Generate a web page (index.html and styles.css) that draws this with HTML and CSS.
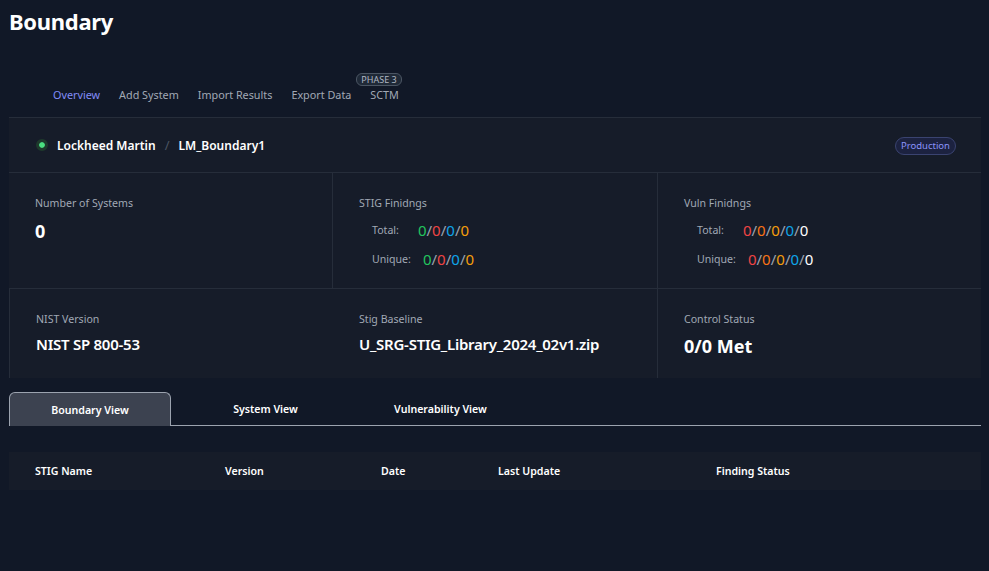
FILE: index.html
```html
<!DOCTYPE html>
<html lang="en">
<head>
<meta charset="utf-8">
<title>Boundary</title>
<link rel="stylesheet" href="styles.css">
</head>
<body>
<div class="page">
  <h1 class="title">Boundary</h1>
  <nav class="nav">
    <a class="nav-link active">Overview</a>
    <a class="nav-link">Add System</a>
    <a class="nav-link">Import Results</a>
    <a class="nav-link">Export Data</a>
    <a class="nav-link badge-host">SCTM<span class="phase">PHASE 3</span></a>
  </nav>

  <section class="card">
    <div class="card-head">
      <div class="crumbs">
        <span class="dot"></span>
        <span class="crumb">Lockheed Martin</span>
        <span class="sep">/</span>
        <span class="crumb">LM_Boundary1</span>
      </div>
      <span class="env">Production</span>
    </div>
    <div class="stats">
      <div class="stat">
        <div class="label">Number of Systems</div>
        <div class="value">0</div>
      </div>
      <div class="stat">
        <div class="label">STIG Finidngs</div>
        <div class="counts">
          <div class="count-row"><span class="count-label total">Total:</span><span class="nums"><span class="g">0</span>/<span class="r">0</span>/<span class="b">0</span>/<span class="o">0</span></span></div>
          <div class="count-row"><span class="count-label unique">Unique:</span><span class="nums"><span class="g">0</span>/<span class="r">0</span>/<span class="b">0</span>/<span class="o">0</span></span></div>
        </div>
      </div>
      <div class="stat">
        <div class="label">Vuln Finidngs</div>
        <div class="counts">
          <div class="count-row"><span class="count-label total">Total:</span><span class="nums"><span class="r">0</span>/<span class="or">0</span>/<span class="o">0</span>/<span class="b">0</span>/<span class="w">0</span></span></div>
          <div class="count-row"><span class="count-label unique">Unique:</span><span class="nums"><span class="r">0</span>/<span class="or">0</span>/<span class="o">0</span>/<span class="b">0</span>/<span class="w">0</span></span></div>
        </div>
      </div>
      <div class="stat row2">
        <div class="label">NIST Version</div>
        <div class="value2">NIST SP 800-53</div>
      </div>
      <div class="stat row2">
        <div class="label">Stig Baseline</div>
        <div class="value2">U_SRG-STIG_Library_2024_02v1.zip</div>
      </div>
      <div class="stat row2">
        <div class="label">Control Status</div>
        <div class="value3">0/0 Met</div>
      </div>
    </div>
  </section>

  <div class="tabs">
    <button class="tab active">Boundary View</button>
    <button class="tab">System View</button>
    <button class="tab">Vulnerability View</button>
  </div>

  <div class="table-head">
    <span class="th c1">STIG Name</span>
    <span class="th c2">Version</span>
    <span class="th c3">Date</span>
    <span class="th c4">Last Update</span>
    <span class="th c5">Finding Status</span>
  </div>
</div>
</body>
</html>
```
FILE: styles.css
```css
* { box-sizing: border-box; }
html, body { margin: 0; padding: 0; }
body {
  background: #111827;
  color: #f3f4f6;
  font-family: "Noto Sans", "Open Sans", sans-serif;
  width: 989px;
  height: 571px;
  overflow: hidden;
}
.page { padding: 0 8px 0 9px; }
.title {
  margin: 0;
  padding-top: 6px;
  font-size: 22px;
  line-height: 30px;
  font-weight: 700;
  color: #ffffff;
  letter-spacing: -0.3px;
}
.nav {
  display: flex;
  align-items: flex-end;
  gap: 19px;
  padding-left: 44px;
  margin-top: 44px;
  height: 23px;
}
.nav-link {
  font-size: 10.8px;
  color: #a1a9b5;
  line-height: 16px;
}
.nav-link.active { color: #818cf8; }
.badge-host { position: relative; }
.phase {
  position: absolute;
  left: -14px;
  top: -14px;
  font-size: 9px;
  line-height: 11px;
  padding: 0 4px;
  border: 1px solid #4b5563;
  border-radius: 6px;
  background: #1f2937;
  color: #b0b8c4;
  white-space: nowrap;
}
.card {
  margin-top: 14px;
  background: #161c29;
  border-top: 1px solid #262d3a;
}
.card-head {
  height: 55px;
  display: flex;
  align-items: center;
  justify-content: space-between;
  padding: 0 25px 0 27px;
  border-bottom: 1px solid #262d3a;
}
.crumbs { display: flex; align-items: center; }
.dot {
  width: 12px; height: 12px;
  border-radius: 50%;
  background: #4ade80;
  border: 3px solid #1e3a2c;
  background-clip: padding-box;
  margin-right: 9px;
}
.crumb { font-size: 12px; font-weight: 600; color: #ffffff; }
.sep { color: #4b5563; margin: 0 9px; font-size: 13px; }
.env {
  font-size: 9.5px;
  line-height: 16px;
  padding: 0 5px;
  border: 1px solid #3a4370;
  background: #1c2240;
  color: #8b93fa;
  border-radius: 9px;
  margin-top: 1px;
}
.stats {
  display: grid;
  grid-template-columns: 324px 324px 324px;
}
.stat {
  height: 116px;
  padding: 22px 26px 0 26px;
  border-bottom: 1px solid #262d3a;
}
.stat:nth-child(1) { border-right: 1px solid #262d3a; }
.stat:nth-child(3) { border-left: 1px solid #262d3a; }
.stat.row2 { height: 89px; border-bottom: none; padding-top: 22px; }
.stat:nth-child(4) { border-left: 1px solid #262d3a; }
.stat:nth-child(6) { border-left: 1px solid #262d3a; }
.label { font-size: 10.6px; color: #a1a9b5; line-height: 16px; }
.value { font-size: 18px; font-weight: 700; color: #fff; margin-top: 8px; }
.value2 { font-size: 15px; font-weight: 600; color: #fff; margin-top: 7px; letter-spacing: -0.25px; }
.value3 { font-size: 18px; font-weight: 700; color: #fff; margin-top: 7px; }
.counts { padding-left: 13px; margin-top: 4px; }
.count-row { display: flex; height: 29px; align-items: center; }
.count-label { font-size: 10.6px; color: #a1a9b5; }
.count-label.total { margin-right: 19px; }
.count-label.unique { margin-right: 12px; }
.nums { font-size: 15px; color: #9ca3af; }
.g { color: #22c55e; }
.r { color: #ef4444; }
.b { color: #0ea5e9; }
.o { color: #f59e0b; }
.or { color: #f97316; }
.w { color: #ffffff; }
.tabs {
  display: flex;
  gap: 14px;
  margin-top: 14px;
  border-bottom: 1px solid #9ca3af;
  height: 34px;
}
.tab {
  width: 161px;
  background: transparent;
  border: none;
  color: #ffffff;
  font-family: inherit;
  font-size: 10.6px;
  font-weight: 600;
  padding: 0;
  margin-bottom: -1px;
}
.tab.active {
  width: 162px;
  background: #3c4250;
  border: 1px solid #9ca3af;
  border-bottom: none;
  border-radius: 6px 6px 0 0;
}
.table-head {
  margin-top: 26px;
  height: 38px;
  background: #161c29;
  display: flex;
  align-items: center;
}
.th { font-size: 10.6px; font-weight: 600; color: #fff; }
.c1 { width: 216px; padding-left: 26px; }
.c2 { width: 156px; }
.c3 { width: 117px; }
.c4 { width: 218px; }
```
